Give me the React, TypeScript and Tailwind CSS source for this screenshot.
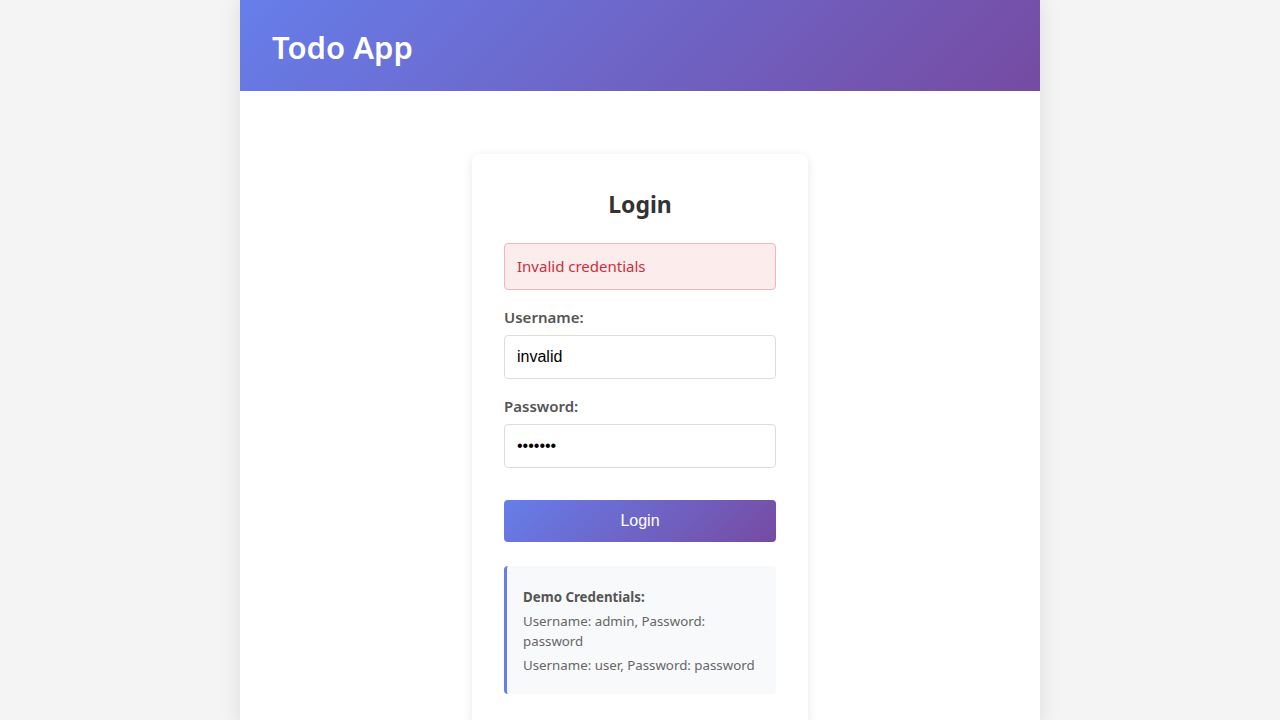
import { useState } from 'react';

const App = () => {
  const [username, setUsername] = useState('invalid');
  const [password, setPassword] = useState('invalid');

  return (
    <div className="min-h-screen bg-[#f4f4f4] font-['Noto_Sans',sans-serif] text-[#333]">
      <div className="mx-auto min-h-screen w-[800px] bg-white shadow-[0_0_20px_rgba(0,0,0,0.1)]">
        <header className="bg-[linear-gradient(135deg,#667eea_0%,#764ba2_100%)] px-8 pt-[26px] pb-[22px] text-white">
          <h1 className="text-[31px] font-semibold leading-[43px]">Todo App</h1>
        </header>

        <main className="px-8 pt-[63px]">
          <div className="mx-auto w-[336px] rounded-lg bg-white px-8 pt-8 pb-8 shadow-[0_2px_10px_rgba(0,0,0,0.1)]">
            <h2 className="mb-[21px] text-center text-[23px] font-bold leading-9 text-[#333]">Login</h2>

            <div className="mb-4 rounded border border-[#f5b5b8] bg-[#fdecec] px-3 py-3 text-[15px] leading-[21px] text-[#c6303e]">
              Invalid credentials
            </div>

            <form onSubmit={(e) => e.preventDefault()}>
              <div className="mb-4">
                <label className="mb-[6px] block text-[15px] font-semibold leading-[23px] text-[#555]">Username:</label>
                <input
                  type="text"
                  value={username}
                  onChange={(e) => setUsername(e.target.value)}
                  className="block h-11 w-full rounded border border-[#ddd] px-3 font-['Liberation_Sans',Arial,sans-serif] text-base text-black outline-none"
                />
              </div>
              <div className="mb-4">
                <label className="mb-[6px] block text-[15px] font-semibold leading-[23px] text-[#555]">Password:</label>
                <input
                  type="password"
                  value={password}
                  onChange={(e) => setPassword(e.target.value)}
                  className="block h-11 w-full rounded border border-[#ddd] px-3 font-['Liberation_Sans',Arial,sans-serif] text-base text-black outline-none"
                />
              </div>
              <button
                type="submit"
                className="mt-8 block h-[42px] w-full rounded bg-[linear-gradient(135deg,#667eea_0%,#764ba2_100%)] font-['Liberation_Sans',Arial,sans-serif] text-base text-white"
              >
                Login
              </button>
            </form>

            <div className="mt-6 rounded border-l-[3px] border-[#667eea] bg-[#f8f9fa] pt-[21px] pr-4 pb-[19px] pl-4 text-[13.3px] leading-5 text-[#666]">
              <p className="mb-1 font-bold text-[#555]">Demo Credentials:</p>
              <p className="mb-1">Username: admin, Password: password</p>
              <p>Username: user, Password: password</p>
            </div>
          </div>
        </main>
      </div>
    </div>
  );
};

export default App;
